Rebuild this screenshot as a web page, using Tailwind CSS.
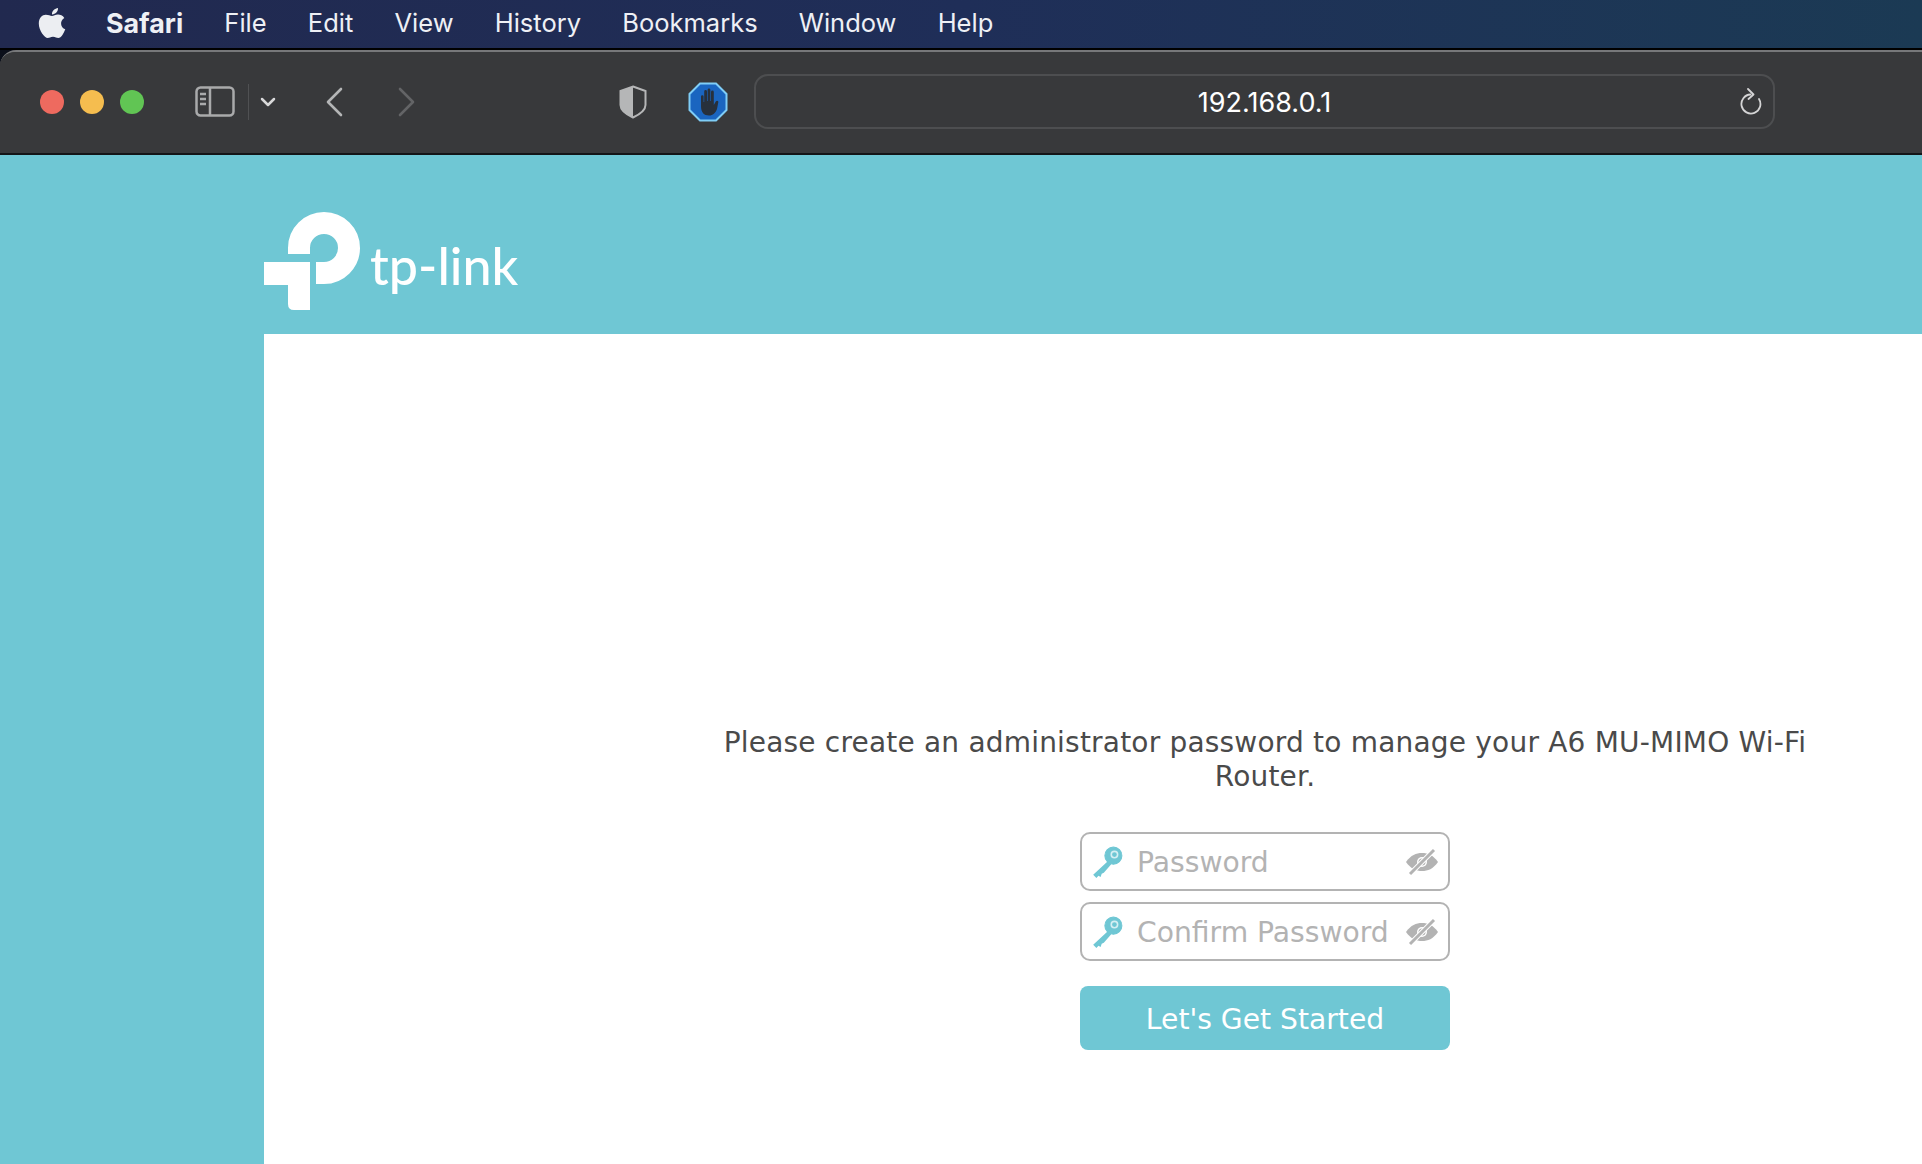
<!doctype html>
<html><head><meta charset="utf-8"><script src="https://cdn.jsdelivr.net/npm/@tailwindcss/browser@4"></script><title>192.168.0.1</title></head>
<body class="w-[1922px] h-[1164px] overflow-hidden bg-[#0b0f1a] font-['Inter','Liberation_Sans',sans-serif]">
<header class="h-[48px] flex items-center bg-gradient-to-r from-[#21294f] via-[#1f2e58] to-[#1b3a54] text-[25.5px] text-[#eef0f5] pl-[38px]">
  <svg class="w-[28px] h-[33px] mr-[40px] -mt-[2px]" viewBox="0 0 28 33" fill="#eceef2"><path d="M20 1c.3 3.400-2.800 6.600-6 6.400C13.600 4.200 17 1.200 20 1zM14 9c1.700 0 3.300-1.400 6-1.400 2.200 0 4.800 1 6.300 3.300-4.800 2.900-4 9.400 1 11.300-1.300 3.300-4 8.800-7 8.800-1.900 0-2.700-1.300-5.300-1.300-2.700 0-3.400 1.300-5.300 1.300C6.700 31 .8 23.500.8 16.500.8 11 4.200 7.800 7.800 7.800c2.600 0 4.500 1.200 6.200 1.200z"/></svg>
  <nav class="flex gap-[41.2px] leading-[36px] -mt-[3px]"><span class="font-bold text-[26.8px]">Safari</span><span>File</span><span>Edit</span><span>View</span><span>History</span><span>Bookmarks</span><span>Window</span><span>Help</span></nav>
</header>
<div class="h-[2px] bg-black"></div>
<main class="h-[1114px] rounded-tl-[16px] overflow-hidden bg-[#38393b] border-t-2 border-[#77787a]">
  <div class="h-[103px] flex items-center pl-[40px] pb-[2px] border-b-2 border-[#141517] bg-[#38393b]">
    <div class="flex gap-[16px] mt-[1px]"><i class="w-[24px] h-[24px] rounded-full bg-[#ee6a5f]"></i><i class="w-[24px] h-[24px] rounded-full bg-[#f5bd4f]"></i><i class="w-[24px] h-[24px] rounded-full bg-[#61c554]"></i></div>
    <svg class="ml-[51px] w-[40px] h-[32px]" viewBox="0 0 40 32" fill="none" stroke="#a9aaab" stroke-width="2.500"><rect x="1.500" y="1.500" width="37" height="28" rx="4"/><path d="M15 1.500v28M5 8h6M5 13h6M5 18h6"/></svg>
    <div class="ml-[13px] w-[1px] h-[36px] bg-[#505153]"></div>
    <svg class="ml-[11px] w-[16px] h-[10px]" viewBox="0 0 16 10" fill="none" stroke="#d8d8d9" stroke-width="2.500" stroke-linecap="round" stroke-linejoin="round"><path d="M2 2l6 6 6-6"/></svg>
    <svg class="ml-[49px] w-[18px] h-[30px]" viewBox="0 0 18 30" fill="none" stroke="#b4b5b6" stroke-width="2.600" stroke-linecap="round" stroke-linejoin="round"><path d="M16 2L3 15l13 13"/></svg>
    <svg class="ml-[55px] w-[18px] h-[30px]" viewBox="0 0 18 30" fill="none" stroke="#636466" stroke-width="2.600" stroke-linecap="round" stroke-linejoin="round"><path d="M2 2l13 13L2 28"/></svg>
    <svg class="ml-[203px] w-[28px] h-[34px]" viewBox="0 0 28 34"><path d="M14 1.500L26.500 6v14c0 5-6 9.500-12.500 12.500C7.500 29.500 1.500 25 1.500 20V6z" fill="none" stroke="#b5b6b7" stroke-width="2"/><path d="M14 1.500L1.500 6v14c0 5 6 9.500 12.500 12.500z" fill="#b5b6b7"/></svg>
    <svg class="ml-[41px] w-[40px] h-[40px]" viewBox="0 0 40 40"><path d="M12 1.500h16L38.500 12v16L28 38.500H12L1.500 28V12z" fill="#1a65c0" stroke="#7fcdf6" stroke-width="2"/><path d="M13 24V14.500a1.300 1.300 0 012.600 0V20l.6 0V9.500a1.400 1.400 0 012.800 0V19h.6V8a1.400 1.400 0 012.800 0v11h.6V10a1.400 1.400 0 012.800 0v13l2-3.500c1-1.600 3.200-.5 2.400 1.200L29 27c-1.500 4-4 6.500-8 6.500-5 0-8-3-8-9.500z" fill="#27303c"/></svg>
    <div class="ml-[26px] w-[1021px] h-[55px] rounded-[14px] border-2 border-[#4d4e50] relative flex items-center justify-center text-[27px] text-white"><span class="mt-[3px]">192.168.0.1</span>
      <svg class="absolute right-[11px] top-[12px] w-[23px] h-[27px]" viewBox="0 0 23 27" fill="none" stroke="#d4d4d5" stroke-width="1.800" stroke-linecap="round" stroke-linejoin="round"><path d="M11.500 6.500A9.500 9.500 0 1 0 20 11"/><path d="M9 1l5.500 5.500L9.500 11"/></svg>
    </div>
  </div>
  <div class="h-[1009px] bg-[#6fc7d4] pl-[264px] flex flex-col">
    <div class="h-[179px] shrink-0 relative">
      <svg class="absolute left-0 top-[55px] w-[100px] h-[100px]" viewBox="264 210 100 100"><path d="M299 254V248A25 25 0 1 1 324 273H316" fill="none" stroke="#fff" stroke-width="22"/><path d="M264 262H310V310H294Q288 310 288 304V285H264z" fill="#fff"/></svg>
      <span class="absolute left-[106px] top-[74px] text-[52px] leading-[72px] text-white font-medium font-['Lato',sans-serif]">tp-link</span>
    </div>
    <section class="flex-1 bg-white pt-[392px] flex flex-col items-center w-[2002px] font-['DejaVu_Sans',sans-serif]">
      <p class="w-[1120px] text-center text-[#4a4a4a] text-[28px] tracking-[0.2px] leading-[34px]">Please create an administrator password to manage your A6 MU-MIMO Wi-Fi Router.</p>
      <div class="mt-[38px] w-[370px] h-[59px] rounded-[10px] border-2 border-[#b3b3b3] flex items-center text-[#b3b3b3] text-[28.2px]">
        <svg class="ml-[8px] w-[34px] h-[34px]" viewBox="0 0 32 32"><path d="M17 15L3 28l3 3 2-2 2 1 1-3 2-1 7-8" fill="#6fc7d4"/><circle cx="22" cy="10" r="8" fill="#6fc7d4" stroke="#6fc7d4"/><circle cx="23" cy="9" r="3" fill="none" stroke="#d5eff3" stroke-width="1.500"/></svg>
        <span class="ml-[13px] mt-[3px]">Password</span>
        <svg class="ml-auto mr-[9px] w-[34px] h-[28px]" viewBox="0 0 34 28"><path d="M1 14C6 7 11 5 17 5s11 2 16 9c-5 7-10 9-16 9S6 21 1 14z" fill="#b3b3b3"/><circle cx="17" cy="14" r="5" fill="#fff"/><circle cx="17" cy="14" r="3.500" fill="#b3b3b3"/><path d="M5 26L29 2" stroke="#fff" stroke-width="5"/><path d="M5 26L29 2" stroke="#b3b3b3" stroke-width="3"/></svg>
      </div>
      <div class="mt-[11px] w-[370px] h-[59px] rounded-[10px] border-2 border-[#b3b3b3] flex items-center text-[#b3b3b3] text-[28.2px]">
        <svg class="ml-[8px] w-[34px] h-[34px]" viewBox="0 0 32 32"><path d="M17 15L3 28l3 3 2-2 2 1 1-3 2-1 7-8" fill="#6fc7d4"/><circle cx="22" cy="10" r="8" fill="#6fc7d4" stroke="#6fc7d4"/><circle cx="23" cy="9" r="3" fill="none" stroke="#d5eff3" stroke-width="1.500"/></svg>
        <span class="ml-[13px] mt-[3px]">Confirm Password</span>
        <svg class="ml-auto mr-[9px] w-[34px] h-[28px]" viewBox="0 0 34 28"><path d="M1 14C6 7 11 5 17 5s11 2 16 9c-5 7-10 9-16 9S6 21 1 14z" fill="#b3b3b3"/><circle cx="17" cy="14" r="5" fill="#fff"/><circle cx="17" cy="14" r="3.500" fill="#b3b3b3"/><path d="M5 26L29 2" stroke="#fff" stroke-width="5"/><path d="M5 26L29 2" stroke="#b3b3b3" stroke-width="3"/></svg>
      </div>
      <button class="mt-[25px] w-[370px] h-[64px] rounded-[8px] bg-[#6fc7d4] text-white text-[28.2px] pt-[4px]">Let's Get Started</button>
    </section>
  </div>
</main>
</body></html>
